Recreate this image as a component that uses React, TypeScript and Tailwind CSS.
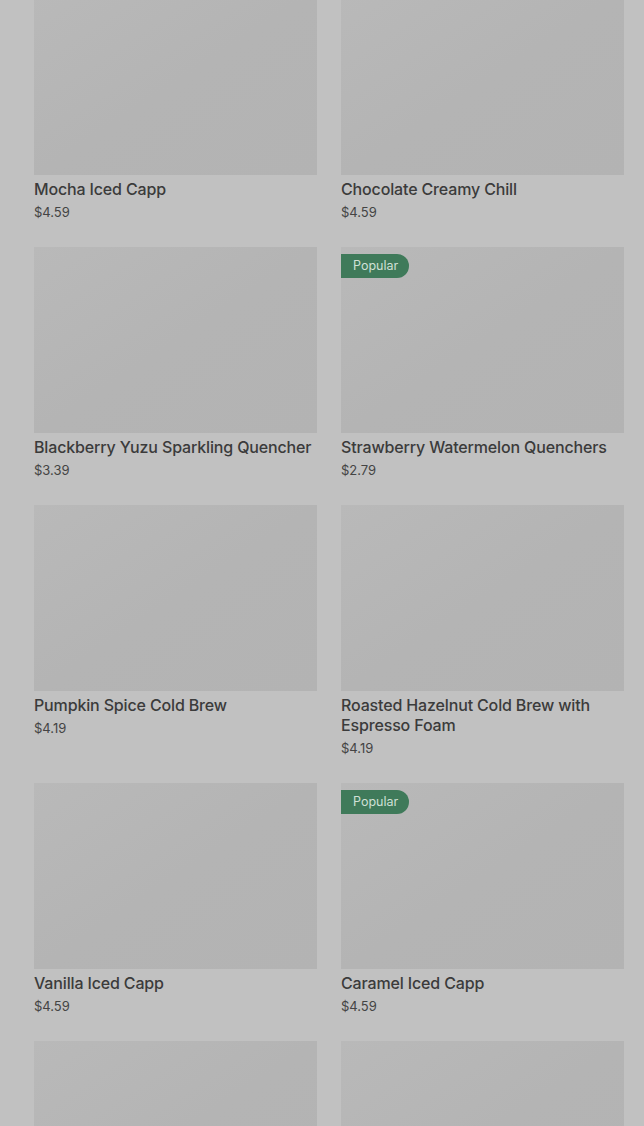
type Item = { name: string; price: string; popular?: boolean };

const items: Item[] = [
  { name: "Mocha Iced Capp", price: "$4.59" },
  { name: "Chocolate Creamy Chill", price: "$4.59" },
  { name: "Blackberry Yuzu Sparkling Quencher", price: "$3.39" },
  { name: "Strawberry Watermelon Quenchers", price: "$2.79", popular: true },
  { name: "Pumpkin Spice Cold Brew", price: "$4.19" },
  { name: "Roasted Hazelnut Cold Brew with Espresso Foam", price: "$4.19" },
  { name: "Vanilla Iced Capp", price: "$4.59" },
  { name: "Caramel Iced Capp", price: "$4.59", popular: true },
  { name: "", price: "" },
  { name: "", price: "" },
];

const ProductCard = ({ item }: { item: Item }) => {
  return (
    <div className="flex flex-col">
      <div className="relative h-[186px] bg-gradient-to-br from-[#b9b9b9] via-[#b4b4b4] to-[#b3b3b3]">
        {item.popular && (
          <span className="absolute left-0 top-[7px] flex h-[24px] w-[68px] items-center pl-[12px] rounded-r-full bg-[#3f7a5a] text-[12.5px] text-[#cfe0d6]">
            Popular
          </span>
        )}
      </div>
      {item.name && (
        <div className="pt-[4px] pb-[26px]">
          <h3 className="text-[16px] leading-[20px] font-medium tracking-[-0.15px] text-[#3b3b3b]">
            {item.name}
          </h3>
          <p className="mt-[4px] text-[13px] leading-[18px] text-[#444444]">{item.price}</p>
        </div>
      )}
    </div>
  );
};

export default function App() {
  return (
    <div
      className="h-[1126px] overflow-hidden bg-[#c1c1c1]"
      style={{ fontFamily: "Inter, 'Liberation Sans', sans-serif" }}
    >
      <div className="-mt-[11px] grid grid-cols-2 gap-x-[24px] pl-[34px] pr-[20px]">
        {items.map((item, i) => (
          <ProductCard key={i} item={item} />
        ))}
      </div>
    </div>
  );
}
